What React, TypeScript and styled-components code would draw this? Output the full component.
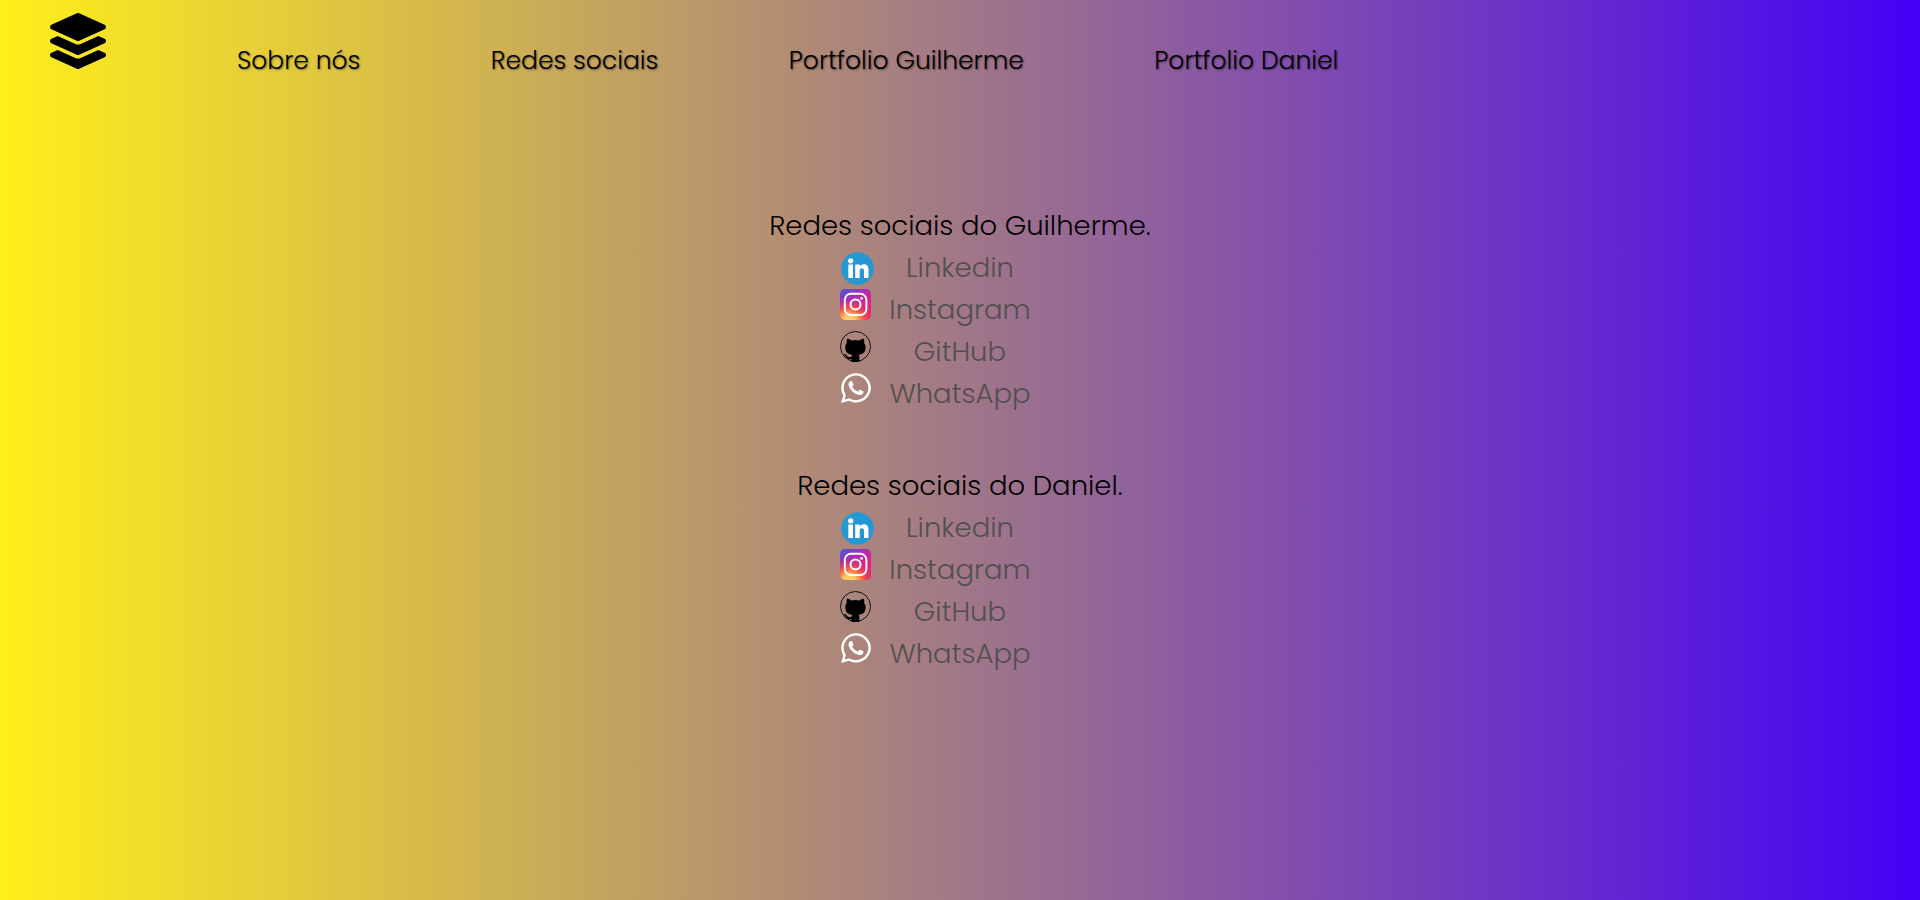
import React from "react";
import styled, { createGlobalStyle } from "styled-components";
import { FaLayerGroup, FaWhatsapp } from "react-icons/fa";

const GlobalStyle = createGlobalStyle`
  * { box-sizing: border-box; margin: 0; padding: 0; }
  body {
    font-family: Poppins, Inter, "Open Sans", sans-serif;
    font-feature-settings: "cv11" 1;
    font-weight: 300;
    color: #000;
  }
`;

const Page = styled.div`
  min-height: 100vh;
  background: linear-gradient(90deg, #ffef1a 0%, #4400f5 100%);
`;

const Header = styled.header`
  display: flex;
  align-items: flex-start;
  height: 204px;
  padding: 13px 50px 0;
`;

const Logo = styled.a`
  display: block;
  width: 56px;
  height: 56px;
  margin-right: 131px;
  color: #000;

  svg { display: block; width: 100%; height: 100%; }
`;

const NavList = styled.nav`
  display: flex;
  gap: 130.5px;
  padding-top: 29px;
`;

const NavLink = styled.a`
  font-size: 25px;
  line-height: 37.5px;
  white-space: nowrap;
  text-shadow: 1px 1px 2px rgba(0, 0, 0, 0.45);
`;

const Main = styled.main`
  display: flex;
  flex-direction: column;
  align-items: center;
  gap: 50px;
`;

const Group = styled.section`
  display: flex;
  flex-direction: column;
  align-items: center;
`;

const Title = styled.h1`
  padding-top: 1px;
  height: 42px;
  font-size: 27.5px;
  font-weight: 300;
  line-height: 42px;
  white-space: nowrap;
`;

const Row = styled.div`
  display: grid;
  grid-template-columns: 34px 1fr 34px;
  width: 240px;
  height: 42px;
`;

const IconSlot = styled.span<{ $size: number; $top: number; $left?: number }>`
  width: ${(p) => p.$size}px;
  height: ${(p) => p.$size}px;
  margin: ${(p) => p.$top}px 0 0 ${(p) => p.$left ?? 0}px;
  color: #fff;

  svg { display: block; width: 100%; height: 100%; }
`;

const SocialLink = styled.a`
  justify-self: center;
  padding-top: 1px;
  height: 42px;
  font-size: 27.5px;
  line-height: 42px;
  color: #505050;
`;

const LinkedinIcon = () => (
  <svg viewBox="0 0 33 33">
    <circle cx="16.5" cy="16.5" r="16.3" fill="#2498d3" />
    <g fill="#fff">
      <circle cx="9.7" cy="8.8" r="2.6" />
      <path d="M7.3 12.6h4.7V26H7.3zM14.2 12.6h4.5v1.8c.7-1.2 2.2-2.2 4.1-2.2 3.6 0 4.7 2.4 4.7 5.9V26h-4.5v-6.8c0-1.7-.4-3-2-3-1.8 0-2.3 1.3-2.3 3V26h-4.5z" />
    </g>
  </svg>
);

const InstagramIcon = ({ id }: { id: string }) => (
  <svg viewBox="0 0 31 31">
    <defs>
      <linearGradient id={`${id}-base`} x1="0.1" y1="0" x2="0.75" y2="1">
        <stop offset="0" stopColor="#4a55d4" />
        <stop offset="0.32" stopColor="#a52fba" />
        <stop offset="0.65" stopColor="#dc2389" />
        <stop offset="1" stopColor="#e8286f" />
      </linearGradient>
      <radialGradient id={`${id}-glow`} cx="0.3" cy="1.08" r="0.78">
        <stop offset="0" stopColor="#ffdb75" />
        <stop offset="0.3" stopColor="#ffc45c" />
        <stop offset="0.6" stopColor="#fb6530" stopOpacity="0.85" />
        <stop offset="1" stopColor="#e02a70" stopOpacity="0" />
      </radialGradient>
    </defs>
    <rect width="31" height="31" rx="5" fill={`url(#${id}-base)`} />
    <rect width="31" height="31" rx="5" fill={`url(#${id}-glow)`} />
    <rect x="4.8" y="4.8" width="21.6" height="21.2" rx="6" fill="none" stroke="#fff" strokeWidth="1.9" />
    <circle cx="15.5" cy="15.5" r="5" fill="none" stroke="#fff" strokeWidth="2" />
    <circle cx="21.6" cy="9.4" r="1.35" fill="#fff" />
  </svg>
);

const GithubIcon = () => (
  <svg viewBox="0 0 31 31">
    <circle cx="15.5" cy="15.5" r="15" fill="none" stroke="#111" strokeWidth="1" />
    <path
      transform="translate(-.6 1.5) scale(2 1.93)"
      fill="#000"
      d="M6.02 15.3V15.21c0-.19-.01-.82-.01-1.49-2.01.37-2.53-.49-2.69-.94-.09-.23-.48-.94-.82-1.13-.28-.15-.68-.52-.01-.53.63-.01 1.08.58 1.23.82.72 1.21 1.87.87 2.33.66.07-.52.28-.87.51-1.07-1.78-.2-3.64-.89-3.64-3.95 0-.87.31-1.59.82-2.15-.08-.2-.36-1.02.08-2.12 0 0 .67-.21 2.2.82.64-.18 1.32-.27 2-.27s1.36.09 2 .27c1.53-1.04 2.2-.82 2.2-.82.44 1.1.16 1.92.08 2.12.51.56.82 1.27.82 2.15 0 3.07-1.87 3.75-3.65 3.95.29.25.54.73.54 1.48 0 1.07-.01 1.93-.01 2.2Q8 15.6 6.02 15.3z"
    />
  </svg>
);

const SocialGroup = ({ id, title }: { id: string; title: string }) => (
  <Group>
    <Title>{title}</Title>
    <Row>
      <IconSlot $size={33} $top={6} $left={0.6}><LinkedinIcon /></IconSlot>
      <SocialLink>Linkedin</SocialLink>
    </Row>
    <Row>
      <IconSlot $size={31} $top={1}><InstagramIcon id={id} /></IconSlot>
      <SocialLink>Instagram</SocialLink>
    </Row>
    <Row>
      <IconSlot $size={31} $top={1.3}><GithubIcon /></IconSlot>
      <SocialLink>GitHub</SocialLink>
    </Row>
    <Row>
      <IconSlot $size={34} $top={-1} $left={-1}><FaWhatsapp /></IconSlot>
      <SocialLink>WhatsApp</SocialLink>
    </Row>
  </Group>
);

export default function App() {
  return (
    <Page>
      <GlobalStyle />
      <Header>
        <Logo><FaLayerGroup /></Logo>
        <NavList>
          <NavLink>Sobre nós</NavLink>
          <NavLink>Redes sociais</NavLink>
          <NavLink>Portfolio Guilherme</NavLink>
          <NavLink>Portfolio Daniel</NavLink>
        </NavList>
      </Header>
      <Main>
        <SocialGroup id="guilherme" title="Redes sociais do Guilherme." />
        <SocialGroup id="daniel" title="Redes sociais do Daniel." />
      </Main>
    </Page>
  );
}
